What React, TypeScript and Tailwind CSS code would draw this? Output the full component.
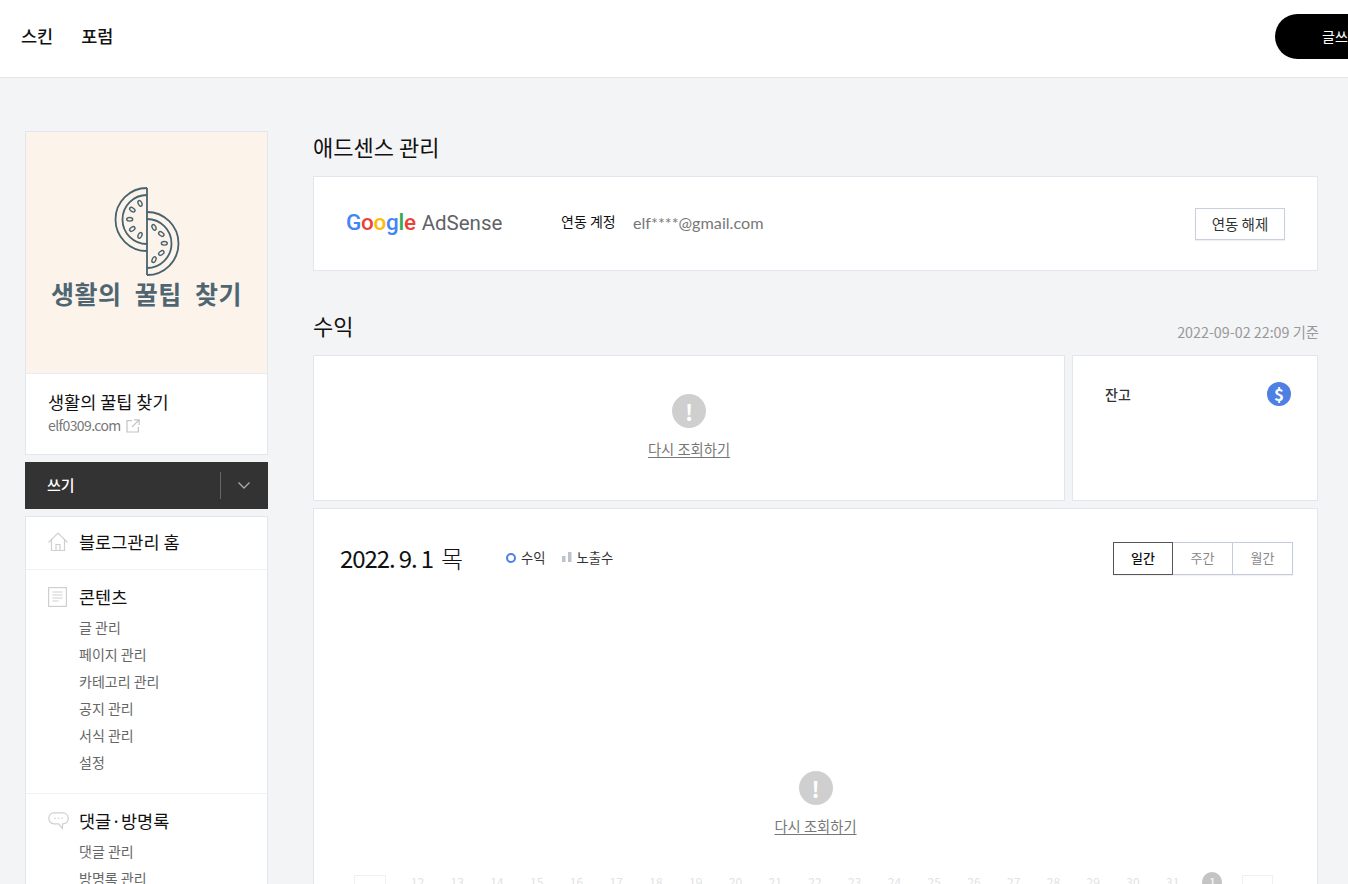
import React from "react";

const F = '[font-family:"Noto_Sans_CJK_KR","Noto_Sans",sans-serif]';

function Melon() {
  const seedsA = [[140, 202.3, 65], [132.3, 208.7, 35], [129.7, 218.3, 0], [132.3, 228, -35], [140, 234.3, -65]];
  const seedsB = [[154, 226.3, 65], [161.3, 233, 35], [164.3, 242.3, 0], [161.3, 252, -35], [154, 258.7, -65]];
  return (
    <svg width="70" height="92" viewBox="112 185 70 92" fill="none" stroke="#48626f" strokeWidth="1.8">
      <path d="M147 187A31.5 31.5 0 0 0 147 250" />
      <path d="M147 194A24.5 24.5 0 0 0 147 243" />
      <path d="M147 211A31.5 31.5 0 0 1 147 274" />
      <path d="M147 218A24.5 24.5 0 0 1 147 267" />
      <path d="M147 187V274" />
      {[...seedsA, ...seedsB].map(([x, y, r], i) => (
        <ellipse key={i} cx={x} cy={y} rx="3" ry="1.8" transform={`rotate(${r} ${x} ${y})`} strokeWidth="1.4" />
      ))}
    </svg>
  );
}

function HomeIcon() {
  return (
    <svg width="20" height="20" viewBox="0 0 20 20" fill="none" stroke="#cfcfcf" strokeWidth="1.2">
      <path d="M0.5 10.5 10 1l9.500 9.500" />
      <path d="M3.500 8v10.500h13V8" />
      <path d="M8 18.500v-6h4v6" />
    </svg>
  );
}

function DocIcon() {
  return (
    <svg width="19" height="20" viewBox="0 0 19 20" fill="none" stroke="#cfcfcf" strokeWidth="1.2">
      <rect x="0.6" y="0.6" width="17.8" height="18.8" />
      <path d="M4.500 5h10M4.500 8h10M4.500 11h10M4.500 14h6" />
    </svg>
  );
}

function ChatIcon() {
  return (
    <svg width="21" height="18" viewBox="0 0 21 18" fill="none" stroke="#cfcfcf" strokeWidth="1.2">
      <path d="M6 .8h9c2.800 0 5.200 2.200 5.200 5.500s-2.400 5.500-5.200 5.500h-.5v4.500l-4-4.500H6C3 11.800.8 9.600.8 6.300S3 .8 6 .8Z" />
      <circle cx="7" cy="6.3" r="0.8" fill="#cfcfcf" stroke="none" />
      <circle cx="10.5" cy="6.3" r="0.8" fill="#cfcfcf" stroke="none" />
      <circle cx="14" cy="6.3" r="0.8" fill="#cfcfcf" stroke="none" />
    </svg>
  );
}

function LinkIcon() {
  return (
    <svg width="14" height="14" viewBox="0 0 14 14" fill="none" stroke="#c4c4c4" strokeWidth="1.2" className="ml-[5px] mt-[2px]">
      <path d="M6 1.600H1v11.400h11.400V8" />
      <path d="M8 .8h5.200V6M13 1 6 8" />
    </svg>
  );
}

function Warn({ label }: { label: string }) {
  return (
    <div className="flex flex-col items-center">
      <div className="flex h-[34px] w-[34px] items-center justify-center rounded-full bg-[#cfcfcf] text-[22px] font-bold text-white">!</div>
      <a className="mt-[11px] text-[14.300px] leading-[20px] text-[#777] underline underline-offset-2">{label}</a>
    </div>
  );
}

function NavSection({ icon, title, items, className }: { icon: React.ReactNode; title: string; items: string[]; className: string }) {
  return (
    <div className={className}>
      <div className="flex h-[24px] items-center">
        <span className="flex w-[54px] justify-start pl-[22px]">{icon}</span>
        <span className="ml-[-1px] text-[17.500px] leading-[24px] font-normal text-[#111]">{title}</span>
      </div>
      <ul className="mt-[5px] pl-[53px]">
        {items.map((t) => (
          <li key={t} className="h-[27px] text-[14px] leading-[27px] text-[#666]">{t}</li>
        ))}
      </ul>
    </div>
  );
}

export default function App() {
  const days = [12, 13, 14, 15, 16, 17, 18, 19, 20, 21, 22, 23, 24, 25, 26, 27, 28, 29, 30, 31];
  return (
    <div className={`${F} h-[884px] w-[1348px] overflow-hidden bg-[#f3f4f6]`}>
      <header className="flex h-[78px] items-center justify-between overflow-hidden border-b border-[#e6e6e6] bg-white pb-[4px] pl-[21px]">
        <nav className="flex gap-[28px] text-[17.500px] font-medium text-[#111]">
          <span>스킨</span>
          <span>포럼</span>
        </nav>
        <div className="mr-[-47px] flex h-[45px] w-[120px] shrink-0 items-center rounded-full bg-black pl-[47px] text-[14px] whitespace-nowrap text-white">글쓰기</div>
      </header>

      <div className="flex items-start pt-[53px] pl-[25px]">
        <aside className="w-[243px] shrink-0">
          <div className="border border-[#e3e6ee] bg-white">
            <div className="flex h-[241px] flex-col items-center bg-[#fcf4ea] pt-[54px]">
              <Melon />
              <div className="text-[25px] leading-[30px] font-bold tracking-[0.5px] [word-spacing:7px] whitespace-nowrap text-[#4f6672]">생활의 꿀팁 찾기</div>
            </div>
            <div className="h-[81px] border-t border-[#e9ebf0] pt-[16px] pl-[22px]">
              <div className="text-[17.500px] leading-[24px] text-[#111]">생활의 꿀팁 찾기</div>
              <div className="mt-[1px] flex items-center text-[14px] leading-[20px] tracking-[-0.6px] text-[#777]">elf0309.com<LinkIcon /></div>
            </div>
          </div>

          <div className="mt-[7px] flex h-[47px] items-center bg-[#333] pl-[22px] text-white">
            <span className="w-[173px] text-[15px] font-medium">쓰기</span>
            <span className="h-[27px] w-px bg-[#666]" />
            <svg width="12" height="7" viewBox="0 0 12 7" fill="none" stroke="#aaa" strokeWidth="1.4" className="ml-[17px]">
              <path d="M.5.5 6 6l5.500-5.500" />
            </svg>
          </div>

          <div className="mt-[7px] border border-[#e3e6ee] bg-white">
            <div className="flex h-[53px] items-center border-b border-[#f0f1f4] pb-[2px]">
              <span className="flex w-[53px] pl-[22px]"><HomeIcon /></span>
              <span className="text-[17.500px] text-[#111]">블로그관리 홈</span>
            </div>
            <NavSection
              className="h-[224px] border-b border-[#f0f1f4] pt-[15px]"
              icon={<DocIcon />}
              title="콘텐츠"
              items={["글 관리", "페이지 관리", "카테고리 관리", "공지 관리", "서식 관리", "설정"]}
            />
            <NavSection
              className="pt-[15px]"
              icon={<ChatIcon />}
              title="댓글·방명록"
              items={["댓글 관리", "방명록 관리", "알림"]}
            />
          </div>
        </aside>

        <main className="ml-[45px] w-[1005px] shrink-0">
          <h2 className="text-[22px] leading-[30px] font-normal text-[#111]">애드센스 관리</h2>
          <section className="mt-[15px] flex h-[95px] items-center border border-[#e3e6ee] bg-white pr-[32px] pl-[32px]">
            <div className="mb-[2px] flex w-[215px] items-baseline leading-none [font-family:Roboto,sans-serif]">
              <span className="text-[22.500px] font-medium tracking-[-0.3px]">
                <span className="text-[#4285f4]">G</span>
                <span className="text-[#ea4335]">o</span>
                <span className="text-[#fbbc05]">o</span>
                <span className="text-[#4285f4]">g</span>
                <span className="text-[#34a853]">l</span>
                <span className="text-[#ea4335]">e</span>
              </span>
              <span className="ml-[6px] text-[20.500px] text-[#5f6368]">AdSense</span>
            </div>
            <span className="mb-[5px] w-[72px] text-[14px] text-[#111]">연동 계정</span>
            <span className="mb-[1px] text-[16.200px] text-[#777] [font-family:Lato,sans-serif]">elf****@gmail.com</span>
            <button className="ml-auto h-[32px] w-[90px] border border-[#c8cfdd] bg-white text-[14.500px] text-[#333] shadow-[0_1px_1px_rgba(0,0,0,0.06)]">연동 해제</button>
          </section>

          <div className="mt-[39px] flex h-[45px] items-start justify-between">
            <h2 className="text-[22px] leading-[30px] font-normal text-[#111]">수익</h2>
            <span className="mt-[12px] mr-[-1px] text-[14.300px] leading-[20px] text-[#999]">2022-09-02 22:09 기준</span>
          </div>

          <div className="flex gap-[7px]">
            <section className="flex h-[146px] w-[752px] items-start justify-center border border-[#e3e6ee] bg-white pt-[38px]">
              <Warn label="다시 조회하기" />
            </section>
            <section className="flex h-[146px] w-[246px] items-start justify-between border border-[#e3e6ee] bg-white pt-[26px] pr-[26px] pl-[32px]">
              <span className="text-[14px] leading-[24px] font-medium text-[#333]">잔고</span>
              <span className="flex h-[24px] w-[24px] items-center justify-center rounded-full bg-[#4e7fe3] text-[17px] font-bold text-white">$</span>
            </section>
          </div>

          <section className="mt-[7px] h-[500px] border border-[#e3e6ee] bg-white pt-[32px]">
            <div className="flex h-[34px] items-center pr-[24px] pl-[26px]">
              <div className="flex w-[166px] text-[24px] leading-[32px] tracking-[-1.100px] whitespace-nowrap text-[#111]">
                <span>2022. 9. 1</span>
                <span className="ml-[8px] font-light tracking-normal">목</span>
              </div>
              <span className="h-[10px] w-[10px] rounded-full border-[2.500px] border-[#4e7fe3]" />
              <span className="ml-[5px] text-[13.300px] text-[#333]">수익</span>
              <svg width="10" height="10" viewBox="0 0 10 10" className="mb-[3px] ml-[17px]" fill="#bcc3cc">
                <rect x="0" y="4" width="3.500" height="6" />
                <rect x="6" y="0" width="3.500" height="10" />
              </svg>
              <span className="ml-[4px] text-[13.300px] text-[#333]">노출수</span>
              <div className="ml-auto flex h-[33px] text-[13px] shadow-[0_1px_1px_rgba(0,0,0,0.05)]">
                <span className="flex w-[60px] items-center justify-center border border-[#555] font-medium text-[#111]">일간</span>
                <span className="flex w-[60px] items-center justify-center border-y border-r border-[#c3cbdc] text-[#888]">주간</span>
                <span className="flex w-[60px] items-center justify-center border-y border-r border-[#c3cbdc] text-[#888]">월간</span>
              </div>
            </div>
            <div className="mt-[196px] flex justify-center">
              <Warn label="다시 조회하기" />
            </div>
            <div className="mt-[27px] ml-[40px] flex items-start">
              <span className="mt-[12px] h-[24px] w-[32px] border border-[#f0f0f0]" />
              <div className="ml-[11.600px] flex">
                {days.map((d) => (
                  <span key={d} className="mt-[9px] w-[39.750px] text-center text-[12px] leading-[20px] text-[#e2e2e2]">{d}</span>
                ))}
                <span className="flex w-[39.750px] justify-center">
                  <span className="mt-[9px] flex h-[20px] w-[20px] items-center justify-center rounded-full bg-[#c4c4c4] text-[12px] font-medium text-[#f3f3f3]">1</span>
                </span>
              </div>
              <span className="mt-[12px] ml-[10px] h-[24px] w-[31px] border border-[#f0f0f0]" />
            </div>
          </section>
        </main>
      </div>
    </div>
  );
}
